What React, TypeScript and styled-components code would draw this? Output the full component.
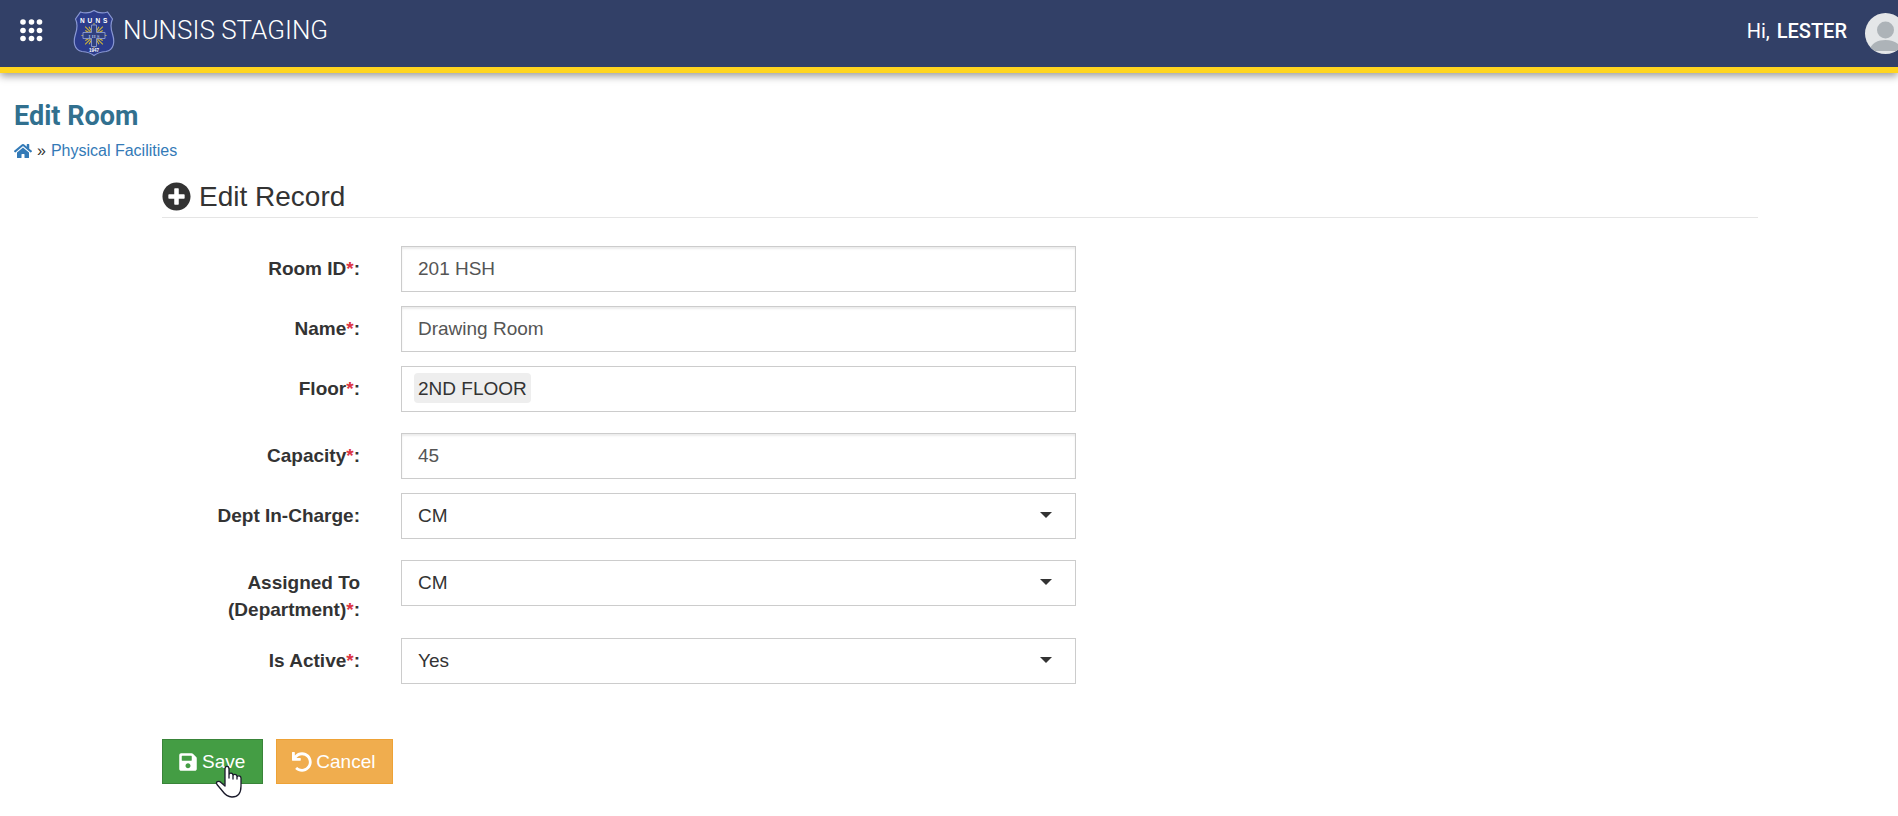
import React, { Fragment, useState } from "react";
import styled, { createGlobalStyle } from "styled-components";
import { FaHome, FaPlusCircle, FaSave, FaUndo } from "react-icons/fa";

const GlobalStyle = createGlobalStyle`
  * { box-sizing: border-box; }
  body {
    margin: 0;
    background: #fff;
    color: #333;
    font-family: "Liberation Sans", Arial, sans-serif;
    font-size: 19px;
    line-height: 27px;
  }
`;

const Header = styled.header`
  display: flex;
  align-items: center;
  height: 73px;
  padding: 0 0 6px 20px;
  border-bottom: 6px solid #ffd520;
  background: #324067;
  color: #fff;
  font-family: Roboto, sans-serif;
  box-shadow: 0 3px 8px rgba(0, 0, 0, 0.4);
  overflow-x: clip;
`;

const MenuButton = styled.button`
  display: flex;
  padding: 0;
  border: 0;
  background: none;
  color: inherit;
  cursor: pointer;
`;

const Brand = styled.a`
  display: flex;
  align-items: center;
  gap: 8px;
  margin-left: 30px;
  color: inherit;
  font-size: 26px;
  font-weight: 300;
  text-decoration: none;
`;

const Crest = styled.svg`
  margin-top: 5px;
`;

const Account = styled.div`
  display: flex;
  align-items: center;
  gap: 18px;
  margin: 5px -8px 0 auto;
  font-size: 20px;

  strong {
    margin-left: 2px;
    font-weight: 500;
  }
`;

const Greeting = styled.span`
  padding-bottom: 3px;
`;

const Avatar = styled.svg`
  flex: none;
  border-radius: 50%;
`;

const PageHead = styled.div`
  padding: 28px 14px 0;
`;

const PageTitle = styled.h1`
  margin: 0;
  color: #31708f;
  font: 700 27px/30px Roboto, sans-serif;
`;

const Breadcrumb = styled.nav`
  display: flex;
  align-items: center;
  gap: 5px;
  margin-top: 8px;
  font-size: 16px;
  line-height: 24px;

  a {
    display: flex;
    color: #337ab7;
    text-decoration: none;
  }
`;

const Panel = styled.form`
  margin: 15px 140px 0 162px;
`;

const PanelTitle = styled.h2`
  display: flex;
  align-items: center;
  gap: 8px;
  margin: 0 0 28px;
  padding-bottom: 2px;
  border-bottom: 1px solid #e5e5e5;
  font-size: 28px;
  font-weight: 400;
  line-height: 37px;
`;

const Row = styled.div<{ $loose?: boolean }>`
  display: grid;
  grid-template-columns: 198fr 675fr 641fr;
  column-gap: 41px;
  align-items: start;
  margin-bottom: ${(p) => (p.$loose ? 21 : 14)}px;
`;

const Label = styled.label`
  padding: 9px 0 1px;
  font-weight: 700;
  text-align: right;
`;

const Required = styled.span`
  color: #dc3545;
`;

const TextInput = styled.input`
  width: 100%;
  height: 46px;
  padding: 0 16px;
  border: 1px solid #ccc;
  background: #fff;
  box-shadow: inset 0 2px 2px rgba(0, 0, 0, 0.08);
  color: #555;
  font: inherit;
`;

const SelectFrame = styled.div`
  display: grid;
  align-items: center;

  > * { grid-area: 1 / 1; }
`;

const Select = styled.select`
  appearance: none;
  width: 100%;
  height: 46px;
  padding: 0 48px 2px 16px;
  border: 1px solid #ccc;
  border-radius: 0;
  background: #fff;
  color: #333;
  font: inherit;
`;

const Caret = styled.span`
  justify-self: end;
  margin: 0 24px 2px 0;
  border: 6px solid transparent;
  border-top-color: #333;
  border-bottom: 0;
  pointer-events: none;
`;

const ChipFrame = styled.div`
  display: flex;
  align-items: center;
  height: 46px;
  padding: 0 12px 2px;
  border: 1px solid #ccc;
`;

const ChipSelect = styled.select`
  appearance: none;
  field-sizing: content;
  height: 30px;
  padding: 0 4px;
  border: 0;
  border-radius: 4px;
  background: #eee;
  color: #333;
  font: inherit;
`;

const Actions = styled.div`
  display: flex;
  gap: 13px;
  padding: 41px 0 24px;
`;

const ActionButton = styled.button<{ $tone: "save" | "cancel" }>`
  position: relative;
  display: flex;
  align-items: center;
  gap: 4px;
  height: 45px;
  padding: 0 17px 0 15px;
  border: 1px solid ${(p) => (p.$tone === "save" ? "#398439" : "#eea236")};
  background: ${(p) => (p.$tone === "save" ? "#449d44" : "#f0ad4e")};
  color: #fff;
  font: inherit;
  cursor: pointer;
`;

const Pointer = styled.svg`
  position: absolute;
  top: 25px;
  left: 52px;
  pointer-events: none;
`;

type FieldSpec = {
  id: string;
  label: string[];
  value: string;
  kind: "text" | "select" | "chip";
  required?: boolean;
  loose?: boolean;
};

const fields: FieldSpec[] = [
  { id: "room", label: ["Room ID"], value: "201 HSH", kind: "text", required: true },
  { id: "name", label: ["Name"], value: "Drawing Room", kind: "text", required: true },
  { id: "floor", label: ["Floor"], value: "2ND FLOOR", kind: "chip", required: true, loose: true },
  { id: "capacity", label: ["Capacity"], value: "45", kind: "text", required: true },
  { id: "dept", label: ["Dept In-Charge"], value: "CM", kind: "select", loose: true },
  { id: "assigned", label: ["Assigned To", "(Department)"], value: "CM", kind: "select", required: true },
  { id: "active", label: ["Is Active"], value: "Yes", kind: "select", required: true },
];

function Field({ field }: { field: FieldSpec }) {
  const [value, setValue] = useState(field.value);
  const options = <option>{field.value}</option>;
  return (
    <Row $loose={field.loose}>
      <Label htmlFor={field.id}>
        {field.label.map((line, i) => (
          <Fragment key={line}>
            {i > 0 && <br />}
            {line}
          </Fragment>
        ))}
        {field.required && <Required>*</Required>}:
      </Label>
      {field.kind === "text" && (
        <TextInput id={field.id} value={value} onChange={(e) => setValue(e.target.value)} />
      )}
      {field.kind === "select" && (
        <SelectFrame>
          <Select id={field.id} value={value} onChange={(e) => setValue(e.target.value)}>
            {options}
          </Select>
          <Caret />
        </SelectFrame>
      )}
      {field.kind === "chip" && (
        <ChipFrame>
          <ChipSelect id={field.id} value={value} onChange={(e) => setValue(e.target.value)}>
            {options}
          </ChipSelect>
        </ChipFrame>
      )}
    </Row>
  );
}

function SchoolCrest() {
  const rays = Array.from({ length: 24 }, (_, i) => i * 15);
  return (
    <Crest width="42" height="48" viewBox="0 0 42 48" aria-hidden="true">
      <path
        d="M21 1.5C17 4 12 4.5 7.5 3L2.5 10C5 15 4.5 19 2.5 25C0 33 1 41 9 42.5C14 43 18 44 21 46.5C24 44 28 43 33 42.5C41 41 42 33 39.5 25C37.5 19 37 15 39.5 10L34.5 3C30 4.5 25 4 21 1.5Z"
        fill="#2c3c8c"
        stroke="#8997d3"
        strokeWidth="1.2"
      />
      <g stroke="#d6bb35" strokeWidth="1">
        {rays.map((a) => (
          <path key={a} d={a % 45 ? "M21 26V16.500" : "M21 26V14"} transform={`rotate(${a} 21 26.500)`} />
        ))}
      </g>
      <path
        d="M18.5 16H23.5V23.500H32V29.500H23.5V37.500H18.5V29.500H10V23.500H18.5Z"
        fill="#2f407f"
        stroke="#8493c8"
        strokeWidth="1"
      />
      <g fill="#fff" fontFamily="Liberation Sans, sans-serif" fontWeight="700">
        <text x="7 14.500 22.500 30" y="14" fontSize="6.500">NUNS</text>
        <text x="21" y="28.500" fontSize="5" textAnchor="middle" fontFamily="Liberation Serif, serif" fill="#aab5dd">I H S</text>
        <text x="21" y="42.500" fontSize="4.500" textAnchor="middle">1947</text>
      </g>
    </Crest>
  );
}

export default function App() {
  return (
    <>
      <GlobalStyle />
      <Header>
        <MenuButton type="button" aria-label="Applications">
          <svg width="23" height="23" fill="#fff" aria-hidden="true">
            {[3, 11.5, 19.5].map((y) => [3, 11.5, 19.5].map((x) => <circle key={`${x}-${y}`} cx={x} cy={y} r="2.8" />))}
          </svg>
        </MenuButton>
        <Brand href="#">
          <SchoolCrest />
          NUNSIS STAGING
        </Brand>
        <Account>
          <Greeting>
            Hi, <strong>LESTER</strong>
          </Greeting>
          <Avatar width="41" height="41" viewBox="0 0 41 41" aria-hidden="true">
            <rect width="41" height="41" fill="#e4e6e8" />
            <circle cx="20.5" cy="17" r="8.5" fill="#adb3b8" />
            <path d="M4 38C6 30 13 27 20.5 27S35 30 37 38Z" fill="#adb3b8" />
          </Avatar>
        </Account>
      </Header>
      <main>
        <PageHead>
          <PageTitle>Edit Room</PageTitle>
          <Breadcrumb aria-label="Breadcrumb">
            <a href="#" aria-label="Home">
              <FaHome size={18} />
            </a>
            <span>»</span>
            <a href="#">Physical Facilities</a>
          </Breadcrumb>
        </PageHead>
        <Panel onSubmit={(e) => e.preventDefault()}>
          <PanelTitle>
            <FaPlusCircle size={29} />
            Edit Record
          </PanelTitle>
          {fields.map((f) => (
            <Field key={f.id} field={f} />
          ))}
          <Actions>
            <ActionButton type="submit" $tone="save">
              <FaSave size={20} />
              Save
              <Pointer width="28" height="34" viewBox="0 0 28 34" aria-hidden="true">
                <path
                  d="M10 21V4C10 0.5 14 0.5 14 4V13V10C14 7.5 18 7.5 18 10.5V14V11C18 8.5 22 9 22 11.5V14V12.5C22 10 26 10.5 26 13V21C26 28 23 32 17 32C12 32 9.5 29 7 25.5L2 19.5C0 16.5 4 15.5 6 17.5L10 21Z"
                  fill="#fff"
                  stroke="#1a1a2a"
                  strokeWidth="1.3"
                  strokeLinejoin="round"
                />
              </Pointer>
            </ActionButton>
            <ActionButton type="button" $tone="cancel">
              <FaUndo size={20} />
              Cancel
            </ActionButton>
          </Actions>
        </Panel>
      </main>
    </>
  );
}
